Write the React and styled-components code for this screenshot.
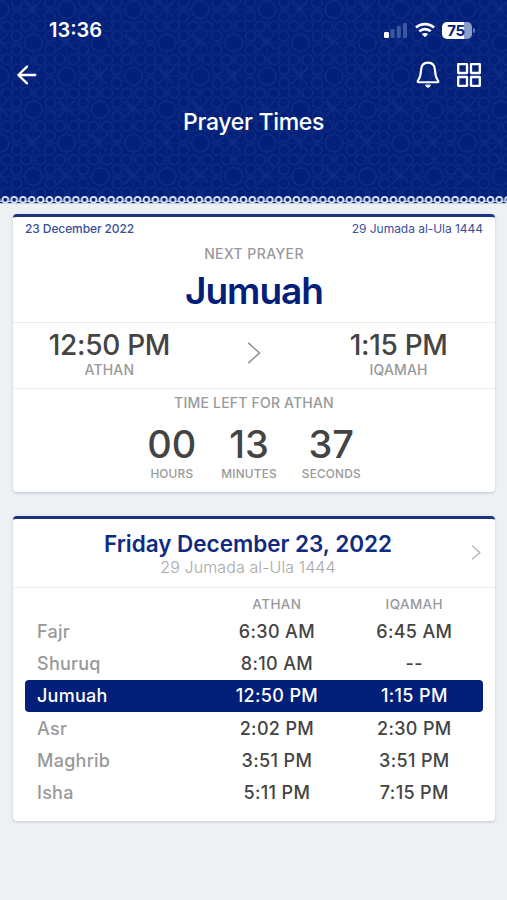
import React from 'react';
import styled, { createGlobalStyle } from 'styled-components';

const NAVY = '#02207a';

const GlobalStyle = createGlobalStyle`
  * {
    box-sizing: border-box;
  }
  body {
    margin: 0;
    background: #edf1f4;
    font-family: Inter, 'Liberation Sans', sans-serif;
  }
`;

const Screen = styled.div`
  width: 507px;
  height: 900px;
  overflow: hidden;
  background: #edf1f4;
`;

const Header = styled.header`
  position: relative;
  height: 204px;
  color: #fff;
  background: ${NAVY};
`;

const Backdrop = styled.svg`
  position: absolute;
  top: 0;
  left: 0;
  width: 100%;
  height: 100%;
`;

const StatusBar = styled.div`
  position: relative;
  display: flex;
  justify-content: space-between;
  align-items: center;
  height: 60px;
  padding: 0 32px 0 49px;
`;

const Clock = styled.span`
  font-size: 20px;
  font-weight: 600;
  letter-spacing: 0;
`;

const StatusIcons = styled.div`
  display: flex;
  align-items: center;
  gap: 7px;
`;

const Battery = styled.div`
  position: relative;
  width: 30px;
  height: 17px;
  margin-right: 3px;
  padding-right: 2px;
  border-radius: 5px;
  background: linear-gradient(90deg, #fff 75%, #8c9cc6 75%);
  color: ${NAVY};
  font-size: 15px;
  font-weight: 700;
  line-height: 17px;
  letter-spacing: -0.4px;
  text-align: center;

  &::after {
    content: '';
    position: absolute;
    top: 6px;
    right: -3px;
    width: 2px;
    height: 5px;
    border-radius: 0 2px 2px 0;
    background: #6c7fb4;
  }
`;

const NavBar = styled.div`
  position: relative;
  display: flex;
  align-items: center;
  justify-content: space-between;
  height: 30px;
  padding: 0 25px 0 16px;
`;

const NavActions = styled.div`
  display: flex;
  align-items: center;
  gap: 16px;
`;

const PageTitle = styled.h1`
  position: relative;
  margin: 18px 0 0;
  font-size: 23px;
  font-weight: 550;
  line-height: 28px;
  letter-spacing: -0.3px;
  text-align: center;
`;

const Content = styled.main`
  display: flex;
  flex-direction: column;
  gap: 24px;
  padding: 10px 12px 0 13px;
`;

const Card = styled.section`
  height: ${({ $height }) => $height}px;
  border-top: 3px solid #1b3380;
  border-radius: 4px;
  background: #fff;
  box-shadow: 0 1px 3px rgba(40, 50, 70, 0.22);
`;

const DateRow = styled.div`
  display: flex;
  justify-content: space-between;
  padding: 4px 12px 8px;
  color: #3a4f9b;
  font-size: 12px;
  line-height: 16px;
`;

const GregorianDate = styled.span`
  font-weight: 500;
  letter-spacing: -0.1px;
`;

const HijriDate = styled.span`
  letter-spacing: -0.04px;
`;

const Caption = styled.div`
  color: #999;
  font-size: ${({ $size }) => $size || 14}px;
  font-weight: 500;
  line-height: 18px;
  letter-spacing: ${({ $spacing }) => $spacing || 0.2}px;
  text-align: center;
`;

const NextPrayer = styled.div`
  height: 106px;
  border-bottom: 1px solid #ebecee;
`;

const PrayerName = styled.h2`
  margin: 6px 0 0;
  color: ${NAVY};
  font-size: 37px;
  font-weight: 600;
  line-height: 44px;
  letter-spacing: -1px;
  text-align: center;
`;

const TimesRow = styled.div`
  display: grid;
  grid-template-columns: 2fr 1fr 2fr;
  align-items: center;
  justify-items: center;
  height: 66px;
  padding-bottom: 2px;
  border-bottom: 1px solid #ebecee;

  > svg {
    margin-bottom: 4px;
  }
`;

const Time = styled.div`
  margin-top: -1px;
  color: #444;
  font-size: 28px;
  font-weight: 550;
  line-height: 32px;
  letter-spacing: -0.3px;
  text-align: center;
`;

const Countdown = styled.div`
  padding-top: 5px;
`;

const Units = styled.div`
  display: flex;
  justify-content: center;
  gap: 25px;
  padding-top: 10px;
`;

const Digits = styled.div`
  height: 43px;
  color: #444;
  font-size: 38px;
  font-weight: 550;
  line-height: 44px;
  text-align: center;
`;

const DayHeader = styled.div`
  display: grid;
  grid-template-columns: 1fr 38px;
  align-items: center;
  justify-items: center;
  height: 69.5px;
  padding-left: 26px;
  border-bottom: 1px solid #ebecee;
`;

const DayTitle = styled.h3`
  margin: 3px 0 0;
  color: #0f2b80;
  font-size: 22.5px;
  font-weight: 600;
  line-height: 26px;
  letter-spacing: -0.02px;
  text-align: center;
`;

const DaySubtitle = styled.div`
  color: #a8a8a8;
  font-size: 16px;
  font-weight: 350;
  line-height: 20px;
  letter-spacing: 0.1px;
  text-align: center;
`;

const Schedule = styled.div`
  padding: 7px 12px 0;
`;

const ScheduleRow = styled.div`
  display: grid;
  grid-template-columns: 4fr 3fr 3fr;
  align-items: center;
  height: ${({ $head }) => ($head ? '20px' : '32.3px')};
  padding-bottom: ${({ $head }) => ($head ? '3px' : 0)};
  border-radius: 4px;
  background: ${({ $active }) => ($active ? NAVY : 'transparent')};
  color: ${({ $active }) => ($active ? '#fff' : '#444')};
  font-size: 18px;
`;

const Name = styled.span`
  padding-left: 12px;
  color: ${({ $active }) => ($active ? '#fff' : '#999')};
  font-weight: ${({ $active }) => ($active ? 550 : 500)};
  letter-spacing: 0.25px;
`;

const Cell = styled.span`
  font-weight: 550;
  text-align: center;
  letter-spacing: 0.35px;
`;

const prayers = [
  { name: 'Fajr', athan: '6:30 AM', iqamah: '6:45 AM' },
  { name: 'Shuruq', athan: '8:10 AM', iqamah: '--' },
  { name: 'Jumuah', athan: '12:50 PM', iqamah: '1:15 PM', active: true },
  { name: 'Asr', athan: '2:02 PM', iqamah: '2:30 PM' },
  { name: 'Maghrib', athan: '3:51 PM', iqamah: '3:51 PM' },
  { name: 'Isha', athan: '5:11 PM', iqamah: '7:15 PM' },
];

const countdown = [
  { value: '00', label: 'HOURS' },
  { value: '13', label: 'MINUTES' },
  { value: '37', label: 'SECONDS' },
];

// one large ring with eight small rings and thin star lines around it
const Rosette = ({ x, y }) => (
  <g transform={`translate(${x} ${y})`}>
    <circle r="8.8" />
    {[[7, 17], [17, 7], [-7, 17], [-17, 7], [7, -17], [17, -7], [-7, -17], [-17, -7]].map(
      ([cx, cy]) => (
        <circle key={`${cx},${cy}`} cx={cx} cy={cy} r="5.3" />
      )
    )}
    <path d="M0-33V-9M0 33V9M-33 0H-9M33 0H9" opacity="0.5" />
    <path d="M24-8 40 8M24 8 40-8M-8 24 8 40M8 24-8 40" />
  </g>
);

const HeaderBackdrop = () => (
  <Backdrop viewBox="0 0 507 204">
    <defs>
      <pattern id="rosettes" width="66.8" height="66.8" patternUnits="userSpaceOnUse" patternTransform="translate(0 9.5)">
        <g fill="none" stroke="#2c4a98" strokeWidth="1.4" opacity="0.3">
          <Rosette x={0} y={0} />
          <Rosette x={66.8} y={0} />
          <Rosette x={0} y={66.8} />
          <Rosette x={66.8} y={66.8} />
          <Rosette x={33.4} y={33.4} />
        </g>
      </pattern>
      <pattern id="lace" x="0.9" y="195" width="8.82" height="9" patternUnits="userSpaceOnUse">
        <circle cx="4.4" cy="4.7" r="2.9" fill="none" stroke="#e6ebf8" strokeWidth="1.8" />
        <path d="M0 6.2H1.6M7.2 6.2H8.82" stroke="#e6ebf8" strokeWidth="1.1" />
        <rect y="8.2" width="8.82" height="0.8" fill="#edf1f4" />
      </pattern>
    </defs>
    <rect width="507" height="204" fill="url(#rosettes)" />
    <rect y="195" width="507" height="9" fill="url(#lace)" />
  </Backdrop>
);

const SignalIcon = () => (
  <svg width="24" height="16" viewBox="0 0 24 16">
    <rect x="0" y="10" width="5" height="6" rx="1.3" fill="#fff" />
    <rect x="6.5" y="7" width="4" height="9" rx="1.3" fill="#3d569f" />
    <rect x="12.8" y="4" width="4" height="12" rx="1.3" fill="#3d569f" />
    <rect x="19" y="1" width="4" height="15" rx="1.3" fill="#3d569f" />
  </svg>
);

const WifiIcon = () => (
  <svg width="20" height="16" viewBox="0 0 20 16" fill="none" stroke="#fff" strokeWidth="2.8">
    <path d="M1 5.6C6 .9 14 .9 19 5.6" />
    <path d="M4.3 9.2C7.6 6.3 12.4 6.3 15.7 9.2" />
    <path d="M10 15.2 6.8 12C8.6 10.5 11.4 10.5 13.2 12Z" fill="#fff" stroke="none" />
  </svg>
);

const BackIcon = () => (
  <svg width="22" height="22" viewBox="0 0 22 22" fill="none" stroke="#fff" strokeWidth="2.3" strokeLinecap="round" strokeLinejoin="round">
    <path d="M19.3 11H2.5M11 2.6 2.4 11l8.6 8.4" />
  </svg>
);

const BellIcon = () => (
  <svg width="24" height="28" viewBox="0 0 24 28" fill="none" stroke="#fff" strokeWidth="2.1" strokeLinecap="round" strokeLinejoin="round">
    <path d="M12 1.6C7.6 1.6 5.1 4.7 5 9.2C4.9 15 4 16.8 1.8 20Q1.2 21.2 2.4 21.3H21.6Q22.8 21.2 22.2 20C20 16.8 19.1 15 19 9.2C18.9 4.7 16.4 1.6 12 1.6Z" />
    <path d="M9.6 24.3C10.4 27 13.6 27 14.4 24.3Z" fill="#fff" strokeWidth="0.8" />
  </svg>
);

const GridIcon = () => (
  <svg width="26" height="26" viewBox="0 0 26 26" fill="none" stroke="#fff" strokeWidth="2.3" strokeLinejoin="round">
    <rect x="2.2" y="2.2" width="8.8" height="8.8" />
    <rect x="15" y="2.2" width="8.8" height="8.8" />
    <rect x="2.2" y="15" width="8.8" height="8.8" />
    <rect x="15" y="15" width="8.8" height="8.8" />
  </svg>
);

const Chevron = ({ width, height, color, stroke }) => (
  <svg width={width} height={height} viewBox="0 0 12 20" fill="none" stroke={color} strokeWidth={stroke}>
    <path d="M.8.8 11 10 .8 19.2" />
  </svg>
);

const App = () => {
  return (
    <Screen>
      <GlobalStyle />
      <Header>
        <HeaderBackdrop />
        <StatusBar>
          <Clock>13:36</Clock>
          <StatusIcons>
            <SignalIcon />
            <WifiIcon />
            <Battery>75</Battery>
          </StatusIcons>
        </StatusBar>
        <NavBar>
          <BackIcon />
          <NavActions>
            <BellIcon />
            <GridIcon />
          </NavActions>
        </NavBar>
        <PageTitle>Prayer Times</PageTitle>
      </Header>

      <Content>
        <Card $height={277.5}>
          <NextPrayer>
            <DateRow>
              <GregorianDate>23 December 2022</GregorianDate>
              <HijriDate>29 Jumada al-Ula 1444</HijriDate>
            </DateRow>
            <Caption $spacing={0.4}>NEXT PRAYER</Caption>
            <PrayerName>Jumuah</PrayerName>
          </NextPrayer>
          <TimesRow>
            <div>
              <Time>12:50 PM</Time>
              <Caption>ATHAN</Caption>
            </div>
            <Chevron width={14} height={22} color="#8c8c8c" stroke={1.3} />
            <div>
              <Time>1:15 PM</Time>
              <Caption>IQAMAH</Caption>
            </div>
          </TimesRow>
          <Countdown>
            <Caption>TIME LEFT FOR ATHAN</Caption>
            <Units>
              {countdown.map((unit) => (
                <div key={unit.label}>
                  <Digits>{unit.value}</Digits>
                  <Caption $size={11.8} $spacing={0.2}>{unit.label}</Caption>
                </div>
              ))}
            </Units>
          </Countdown>
        </Card>

        <Card $height={305.5}>
          <DayHeader>
            <div>
              <DayTitle>Friday December 23, 2022</DayTitle>
              <DaySubtitle>29 Jumada al-Ula 1444</DaySubtitle>
            </div>
            <Chevron width={10} height={15} color="#aaa" stroke={1.7} />
          </DayHeader>
          <Schedule>
            <ScheduleRow $head>
              <span />
              <Caption $size={13.5} $spacing={0.4}>ATHAN</Caption>
              <Caption $size={13.5} $spacing={0.4}>IQAMAH</Caption>
            </ScheduleRow>
            {prayers.map((prayer) => (
              <ScheduleRow key={prayer.name} $active={prayer.active}>
                <Name $active={prayer.active}>{prayer.name}</Name>
                <Cell>{prayer.athan}</Cell>
                <Cell>{prayer.iqamah}</Cell>
              </ScheduleRow>
            ))}
          </Schedule>
        </Card>
      </Content>
    </Screen>
  );
};

export default App;
